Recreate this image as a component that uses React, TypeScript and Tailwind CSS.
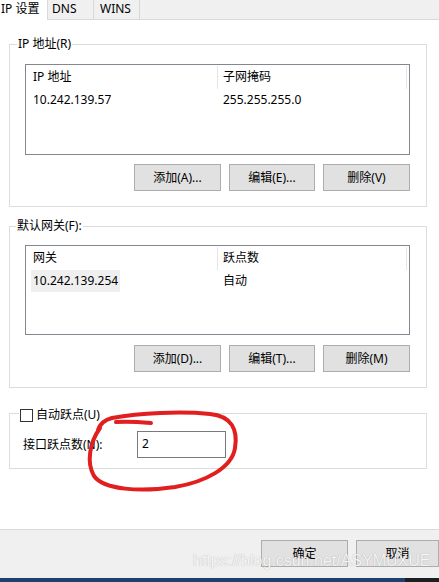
import React from "react";

const font = "font-['Noto_Sans','Noto_Sans_CJK_SC',sans-serif]";

function Btn({ label, w = "w-[86px]" }: { label: string; w?: string }) {
  return (
    <div
      className={`${w} h-[27px] bg-[#e1e1e1] border border-[#adadad] flex items-center justify-center leading-[16px]`}
    >
      {label}
    </div>
  );
}

function List({
  h,
  c1,
  c2,
  v1,
  v2,
  highlight,
}: {
  h: string;
  c1: string;
  c2: string;
  v1: string;
  v2: string;
  highlight?: boolean;
}) {
  return (
    <div className={`${h} border border-[#828790] bg-white`}>
      <div className="flex h-[24px]">
        <div className="w-[191px] pl-[7px] flex items-center">{c1}</div>
        <div className="w-px h-[23px] mt-[1px] bg-[#e5e5e5]" />
        <div className="w-[188px] pl-[5px] flex items-center">{c2}</div>
        <div className="w-px h-[23px] mt-[1px] bg-[#e5e5e5]" />
      </div>
      <div className="flex h-[22px]">
        <div className="w-[191px] pl-[5px] flex items-stretch">
          <div
            className={`px-[2px] flex items-center ${highlight ? "bg-[#efefef]" : ""}`}
          >
            {v1}
          </div>
        </div>
        <div className="w-px" />
        <div className="w-[188px] pl-[5px] flex items-center">{v2}</div>
      </div>
    </div>
  );
}

export default function App() {
  return (
    <div
      className={`relative w-[439px] h-[582px] overflow-hidden bg-white flex flex-col text-[12px] text-black ${font}`}
    >
      {/* Tabs */}
      <div className="flex h-[20px] shrink-0 bg-[#f0f0f0] border-b border-[#d9d9d9]">
        <div className="w-[47px] h-[20px] bg-white pl-[1px] flex items-center leading-[16px] pb-[3px]">
          IP 设置
        </div>
        <div className="w-[46px] border-l border-[#d9d9d9] pl-[4px] flex items-center leading-[16px] pb-[2px]">
          DNS
        </div>
        <div className="w-[47px] border-l border-r border-[#d9d9d9] pl-[6px] flex items-center leading-[16px] pb-[2px]">
          WINS
        </div>
      </div>

      <div className="px-[9px]">
        {/* Group 1 */}
        <fieldset className="mt-[16px] w-[418px] border border-[#dcdcdc]">
          <legend className="ml-[7px] px-[1px] leading-[16px]">IP 地址(R)</legend>
          <div className="pl-[15px] pr-[16px] pt-[12px] pb-[15px]">
            <List
              h="h-[91px]"
              c1="IP 地址"
              c2="子网掩码"
              v1="10.242.139.57"
              v2="255.255.255.0"
            />
            <div className="mt-[9px] flex justify-end gap-[8px]">
              <Btn label="添加(A)..." w="w-[87px]" />
              <Btn label="编辑(E)..." />
              <Btn label="删除(V)" w="w-[87px]" />
            </div>
          </div>
        </fieldset>

        {/* Group 2 */}
        <fieldset className="mt-[11px] w-[418px] border border-[#dcdcdc]">
          <legend className="ml-[6px] px-[1px] leading-[16px]">默认网关(F):</legend>
          <div className="pl-[15px] pr-[16px] pt-[11px] pb-[15px]">
            <List
              h="h-[90px]"
              c1="网关"
              c2="跃点数"
              v1="10.242.139.254"
              v2="自动"
              highlight
            />
            <div className="mt-[10px] flex justify-end gap-[8px]">
              <Btn label="添加(D)..." w="w-[87px]" />
              <Btn label="编辑(T)..." />
              <Btn label="删除(M)" w="w-[87px]" />
            </div>
          </div>
        </fieldset>

        {/* Group 3 */}
        <fieldset className="mt-[15px] w-[418px] border border-[#dcdcdc]">
          <legend className="ml-[9px] pl-[1px] pr-[58px] pt-[4px] leading-[16px]">
            <div className="flex items-center h-[16px] gap-[3px]">
              <div className="w-[13px] h-[13px] border border-[#333333] bg-white" />
              <span>自动跃点(U)</span>
            </div>
          </legend>
          <div className="pl-[13px] pt-[8px] pb-[10px] flex items-center">
            <div className="w-[114px] leading-[16px]">接口跃点数(N):</div>
            <div className="w-[89px] h-[27px] border border-[#7a7a7a] bg-white pl-[4px] flex items-center leading-[16px] pb-[2px]">
              2
            </div>
          </div>
        </fieldset>
      </div>

      <div className="flex-1" />

      {/* Footer */}
      <div className="shrink-0 border-t border-[#dadada] bg-[#f0f0f0] h-[49px] pt-[10px] flex justify-end gap-[8px]">
        <Btn label="确定" w="w-[87px]" />
        <Btn label="取消" w="w-[83px]" />
      </div>
      <div className="shrink-0 h-[4px] flex">
        <div className="flex-1 bg-[#1f3f6d]" />
        <div className="w-[34px] bg-[#1b1f24]" />
      </div>

      {/* Watermark */}
      <div className="absolute left-[193px] top-[551px] text-[16px] leading-[20px] font-['Liberation_Sans',sans-serif] text-white/90 [text-shadow:0_0_1px_rgba(0,0,0,0.35)] pointer-events-none">
        https://blog.csdn.net/ASYMUXUE
      </div>

      {/* Red hand-drawn circle */}
      <svg
        className="absolute left-0 top-0 pointer-events-none"
        width="439"
        height="582"
        viewBox="0 0 439 582"
      >
        <path
          d="M 100 428 C 90 442, 86 462, 94 476 C 104 490, 140 492, 175 487 C 205 482, 232 468, 235 448 C 238 430, 232 416, 210 414 C 180 411, 140 413, 112 418 C 104 420, 100 424, 98 430"
          fill="none"
          stroke="#e21f1f"
          strokeWidth="4"
          strokeLinecap="round"
        />
        <path
          d="M 116 422 C 128 421, 140 422, 151 423"
          fill="none"
          stroke="#e21f1f"
          strokeWidth="4"
          strokeLinecap="round"
        />
      </svg>
    </div>
  );
}
